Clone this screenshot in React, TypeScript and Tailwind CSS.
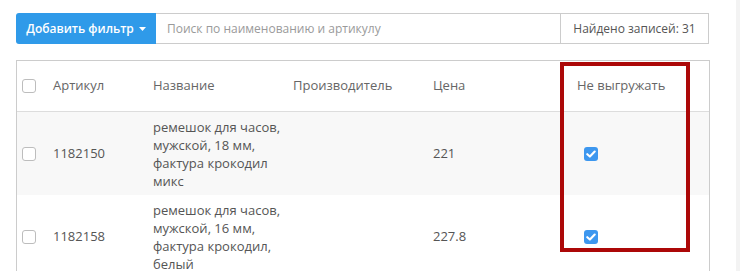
import React from 'react';

type Row = { sku: string; name: string[]; maker: string; price: string; skip: boolean; shaded: boolean };

const rows: Row[] = [
    { sku: '1182150', name: ['ремешок для часов,', 'мужской, 18 мм,', 'фактура крокодил', 'микс'], maker: '', price: '221', skip: true, shaded: true },
    { sku: '1182158', name: ['ремешок для часов,', 'мужской, 16 мм,', 'фактура крокодил,', 'белый'], maker: '', price: '227.8', skip: true, shaded: false },
];

const cols = 'grid grid-cols-[36px_100px_140px_140px_130px_1fr]';

function Box({ checked }: { checked?: boolean }) {
    if (checked) {
        return (
            <span className="w-[14px] h-[14px] rounded-[3px] bg-[#3d97ef] flex items-center justify-center">
                <svg width="10" height="8" viewBox="0 0 10 8">
                    <path d="M1.3 4.2 L3.9 6.6 L8.7 1.6" fill="none" stroke="white" strokeWidth="2.1" strokeLinecap="round" strokeLinejoin="round" />
                </svg>
            </span>
        );
    }
    return <span className="w-[14px] h-[14px] rounded-[3px] border border-[#bdbdbd] bg-white block" />;
}

export default function App() {
    return (
        <div className="w-[740px] h-[271px] overflow-hidden bg-white relative text-[13px] text-[#666]" style={{ fontFamily: '"Open Sans", "Noto Sans", sans-serif' }}>
            {/* scrollbar strip */}
            <div className="absolute right-0 top-0 bottom-0 w-[4px] bg-[#f3f3f3]" />

            <div className="pl-4 pt-[13px] w-[725px]">
                {/* Toolbar */}
                <div className="flex h-[31px] text-[12px]">
                    <button className="w-[140px] h-full rounded-l-[3px] bg-[#2f9ae9] text-white font-semibold flex items-center justify-center gap-[5px] text-[12px]">
                        Добавить фильтр
                        <svg width="7" height="4" viewBox="0 0 7 4"><path d="M0 0 H7 L3.5 4 Z" fill="white" /></svg>
                    </button>
                    <div className="w-[404px] h-full border-y border-[#ccc] flex items-center pl-[11px] text-[#9a9a9a]">
                        Поиск по наименованию и артикулу
                    </div>
                    <div className="w-[149px] h-full border border-[#ccc] flex items-center justify-center text-[#555]">
                        Найдено записей: 31
                    </div>
                </div>

                {/* Table */}
                <div className="mt-[16px] w-[694px] border-l border-t border-r border-[#ccc]">
                    <div className={`${cols} h-[51px] items-center border-b border-[#ddd]`}>
                        <div className="pl-[5px]"><Box /></div>
                        <div>Артикул</div>
                        <div>Название</div>
                        <div>Производитель</div>
                        <div>Цена</div>
                        <div className="pl-[14px]">Не выгружать</div>
                    </div>
                    {rows.map((r) => (
                        <div key={r.sku} className={`${cols} h-[83px] items-center ${r.shaded ? 'bg-[#f8f8f8]' : 'bg-white'}`}>
                            <div className="pl-[5px]"><Box /></div>
                            <div className="text-[#555]">{r.sku}</div>
                            <div className="leading-[18px] text-[#555]">
                                {r.name.map((l) => <div key={l}>{l}</div>)}
                            </div>
                            <div>{r.maker}</div>
                            <div className="text-[#555]">{r.price}</div>
                            <div className="pl-[21px]"><Box checked={r.skip} /></div>
                        </div>
                    ))}
                </div>
            </div>

            {/* highlight frame */}
            <div className="absolute left-[560px] top-[62px] w-[130px] h-[190px] border-4 border-[#ac0808]" />
        </div>
    );
}
